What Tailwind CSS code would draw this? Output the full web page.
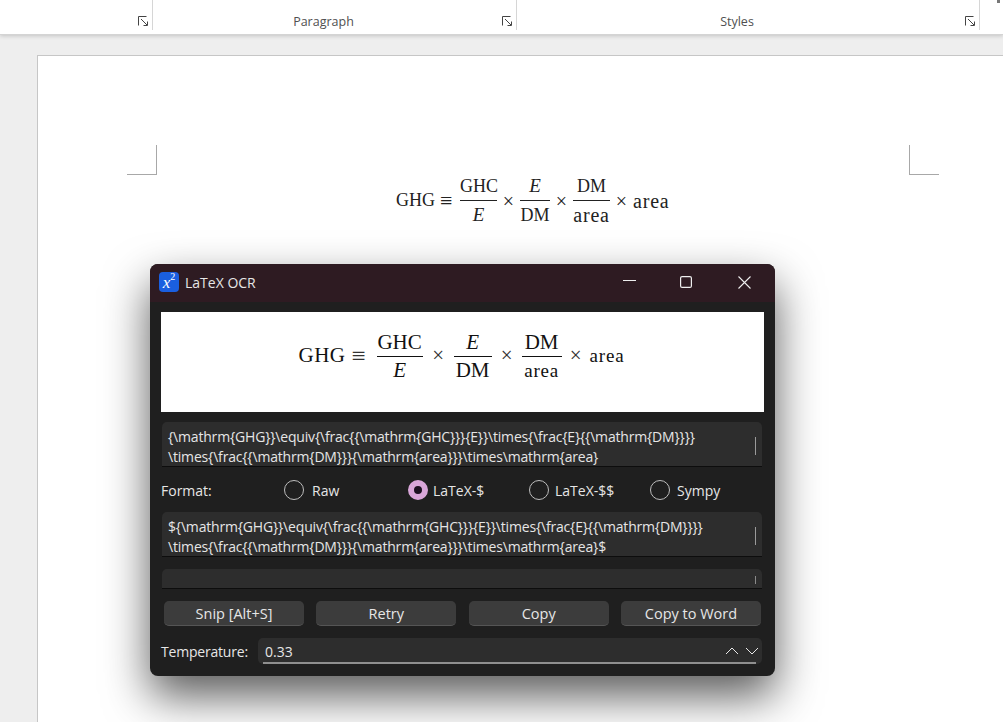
<!DOCTYPE html>
<html lang="en">
<head>
    <meta charset="UTF-8">
    <title>LaTeX OCR</title>
    <script src="https://cdn.jsdelivr.net/npm/@tailwindcss/browser@4"></script>
</head>
<body class="overflow-hidden bg-[#eeeeee] font-['Open_Sans',sans-serif]">
    <div class="relative h-[722px] w-[1003px] overflow-hidden">
        <!-- Word ribbon -->
        <header class="relative flex h-[35px] border-b border-[#d4d4d4] bg-white text-[12.5px] text-[#505050] shadow-[0_1px_4px_rgba(0,0,0,0.18)]">
            <div class="flex h-[30px] w-[153px] items-end justify-end border-r border-[#d6d6d6] pb-[3px] pr-[3px]">
                <svg class="h-[11px] w-[11px]" viewBox="0 0 11 11" fill="none" stroke="#444"><path d="M.5 9.5V.5h8M3 3l6 6M5.5 9.5H9.5V5.5"/></svg>
            </div>
            <div class="relative flex h-[30px] w-[364px] items-end justify-center border-r border-[#d6d6d6] pb-[1px] pr-[22px]">
                <span class="translate-y-[3px]">Paragraph</span>
                <svg class="absolute bottom-[3px] right-[3px] h-[11px] w-[11px]" viewBox="0 0 11 11" fill="none" stroke="#444"><path d="M.5 9.5V.5h8M3 3l6 6M5.5 9.5H9.5V5.5"/></svg>
            </div>
            <div class="relative flex h-[30px] w-[463px] items-end justify-center border-r border-[#d6d6d6] pb-[1px] pr-[22px]">
                <span class="translate-y-[3px]">Styles</span>
                <svg class="absolute bottom-[3px] right-[3px] h-[11px] w-[11px]" viewBox="0 0 11 11" fill="none" stroke="#444"><path d="M.5 9.5V.5h8M3 3l6 6M5.5 9.5H9.5V5.5"/></svg>
            </div>
            <div class="absolute left-[997px] top-0 h-[3px] w-[3px] bg-[#777]"></div>
        </header>

        <!-- Document page -->
        <main class="absolute left-[37px] top-[55px] h-[700px] w-[1000px] border-l border-t border-[#c6c6c6] bg-white">
            <div class="absolute left-[89px] top-[89px] h-[30px] w-[30px] border-b border-r border-[#a8a8a8]"></div>
            <div class="absolute left-[871px] top-[89px] h-[30px] w-[30px] border-b border-l border-[#a8a8a8]"></div>
            <div class="absolute left-[358px] top-[116px] flex items-center font-['Liberation_Serif',serif] text-[18px] text-[#222]">
                <span class="w-[44px]">GHG</span>
                <span class="w-[20px] text-[22px]">≡</span>
                <div class="flex w-[37px] flex-col items-center leading-[28px]"><span class="w-full border-b border-[#222] text-center">GHC</span><i class="text-[19px]">E</i></div>
                <span class="w-[23px] text-center text-[20px]">×</span>
                <div class="flex w-[30px] flex-col items-center leading-[28px]"><i class="w-full border-b border-[#222] text-center text-[19px]">E</i><span>DM</span></div>
                <span class="w-[23px] text-center text-[20px]">×</span>
                <div class="flex w-[37px] flex-col items-center leading-[28px]"><span class="w-full border-b border-[#222] text-center">DM</span><span class="text-[20px] tracking-[0.8px]">area</span></div>
                <span class="w-[23px] text-center text-[20px]">×</span>
                <span class="text-[20px] tracking-[0.8px]">area</span>
            </div>
        </main>

        <!-- LaTeX OCR window -->
        <section class="absolute left-[150px] top-[264px] flex h-[412px] w-[625px] flex-col overflow-hidden rounded-[8px] bg-[#1f1f1f] text-[14px] text-[#e6e6e6] shadow-[0_20px_45px_rgba(0,0,0,0.65)]">
            <div class="flex h-[38px] shrink-0 items-center bg-[#2e1b22] pb-[2px] pl-[9px]">
                <div class="flex h-[20px] w-[20px] items-center justify-center rounded-[4px] bg-[#1a5fe0] font-['Liberation_Serif',serif] text-[17px] italic leading-none text-white">x<sup class="text-[10px] not-italic">2</sup></div>
                <span class="ml-[6px] text-[14px]">LaTeX OCR</span>
                <div class="ml-auto flex items-center gap-[45px] pr-[24px]">
                    <svg class="h-[12px] w-[13px] -translate-y-[1px]" viewBox="0 0 13 12" fill="none" stroke="#eee"><path d="M0 5.5h13"/></svg>
                    <svg class="h-[12px] w-[12px] -translate-x-[1px]" viewBox="0 0 12 12" fill="none" stroke="#eee" stroke-width="1.2"><rect x=".6" y=".6" width="10.8" height="10.8" rx="1.5"/></svg>
                    <svg class="h-[13px] w-[13px]" viewBox="0 0 13 13" fill="none" stroke="#eee" stroke-width="1.1"><path d="M.5.5l12 12M12.5.5l-12 12"/></svg>
                </div>
            </div>

            <div class="flex flex-1 flex-col px-[11px] pt-[10px]">
                <!-- Rendered equation -->
                <div class="flex h-[100px] w-[603px] items-center justify-center bg-white pb-[12px] pr-[2px] font-['Liberation_Serif',serif] text-[21px] text-[#111]">
                    <span class="w-[53px] tracking-[0.4px]">GHG</span>
                    <span class="w-[25px] text-[25px] text-[#333]">≡</span>
                    <div class="flex w-[46px] flex-col items-center leading-[27px]"><span class="w-full border-b border-[#111] text-center">GHC</span><i>E</i></div>
                    <span class="w-[31px] text-center text-[#333]">×</span>
                    <div class="flex w-[38px] flex-col items-center leading-[27px]"><i class="w-full border-b border-[#111] text-center">E</i><span>DM</span></div>
                    <span class="w-[30px] text-center text-[#333]">×</span>
                    <div class="flex w-[40px] flex-col items-center leading-[27px]"><span class="w-full border-b border-[#111] text-center">DM</span><span class="text-[19px] tracking-[0.8px]">area</span></div>
                    <span class="w-[28px] text-center text-[#333]">×</span>
                    <span class="text-[19px] tracking-[0.8px]">area</span>
                </div>

                <!-- Raw output -->
                <div class="relative ml-[1px] mt-[10px] h-[45px] w-[600px] rounded-t-[5px] border-b border-[#0d0d0d] bg-[#2d2d2d] px-[6px] pt-[5px] leading-[20px] tracking-[-0.18px]">
                    <div class="whitespace-nowrap">{\mathrm{GHG}}\equiv{\frac{{\mathrm{GHC}}}{E}}\times{\frac{E}{{\mathrm{DM}}}}</div>
                    <div class="whitespace-nowrap">\times{\frac{{\mathrm{DM}}}{\mathrm{area}}}\times\mathrm{area}</div>
                    <div class="absolute right-[6px] top-[15px] h-[18px] w-[1px] bg-[#9a9a9a]"></div>
                </div>

                <!-- Format radios -->
                <div class="flex h-[45px] items-center pt-[1px]">
                    <span class="w-[123px]">Format:</span>
                    <label class="flex w-[124px] items-center gap-[8px]"><span class="h-[20px] w-[20px] rounded-full border-[1.5px] border-[#bdbdbd]"></span>Raw</label>
                    <label class="flex w-[121px] items-center gap-[5px]"><span class="h-[20px] w-[20px] rounded-full border-[6px] border-[#d9a6d9] bg-[#1c1020]"></span>LaTeX-$</label>
                    <label class="flex w-[121px] items-center gap-[6px]"><span class="h-[20px] w-[20px] rounded-full border-[1.5px] border-[#bdbdbd]"></span>LaTeX-$$</label>
                    <label class="flex items-center gap-[7px]"><span class="h-[20px] w-[20px] rounded-full border-[1.5px] border-[#bdbdbd]"></span>Sympy</label>
                </div>

                <!-- Formatted output -->
                <div class="relative ml-[1px] h-[45px] w-[600px] rounded-t-[5px] border-b border-[#0d0d0d] bg-[#2d2d2d] px-[6px] pt-[5px] leading-[20px] tracking-[-0.18px]">
                    <div class="whitespace-nowrap">${\mathrm{GHG}}\equiv{\frac{{\mathrm{GHC}}}{E}}\times{\frac{E}{{\mathrm{DM}}}}</div>
                    <div class="whitespace-nowrap">\times{\frac{{\mathrm{DM}}}{\mathrm{area}}}\times\mathrm{area}$</div>
                    <div class="absolute right-[6px] top-[15px] h-[18px] w-[1px] bg-[#9a9a9a]"></div>
                </div>

                <!-- Empty box -->
                <div class="relative ml-[1px] mt-[12px] h-[20px] w-[600px] rounded-t-[5px] border-b border-[#0d0d0d] bg-[#2d2d2d]">
                    <div class="absolute right-[6px] top-[7px] h-[8px] w-[1px] bg-[#8a8a8a]"></div>
                </div>

                <!-- Buttons -->
                <div class="ml-[3px] mt-[12px] flex w-[597px] justify-between text-[14.5px]">
                    <button class="h-[25px] w-[140px] rounded-[5px] border-b border-[#555] bg-[#3c3c3c] pt-[2px]">Snip [Alt+S]</button>
                    <button class="h-[25px] w-[140px] rounded-[5px] border-b border-[#555] bg-[#3c3c3c] pt-[2px]">Retry</button>
                    <button class="h-[25px] w-[140px] rounded-[5px] border-b border-[#555] bg-[#3c3c3c] pt-[2px]">Copy</button>
                    <button class="h-[25px] w-[140px] rounded-[5px] border-b border-[#555] bg-[#3c3c3c] pt-[2px]">Copy to Word</button>
                </div>

                <!-- Temperature -->
                <div class="mt-[12px] flex items-center">
                    <span class="w-[97px] tracking-[-0.2px]">Temperature:</span>
                    <div class="relative flex h-[26px] w-[504px] items-center rounded-[5px] bg-[#2d2d2d] pl-[7px]">
                        <span>0.33</span>
                        <svg class="ml-auto mr-[3px] h-[10px] w-[34px]" viewBox="0 0 34 10" fill="none" stroke="#e8e8e8"><path d="M1 8l6-6 6 6M21 2l6 6 6-6"/></svg>
                        <div class="absolute bottom-0 left-[5px] right-[6px] h-[2px] bg-[#8f8f8f]"></div>
                    </div>
                </div>
            </div>
        </section>
    </div>
</body>
</html>
